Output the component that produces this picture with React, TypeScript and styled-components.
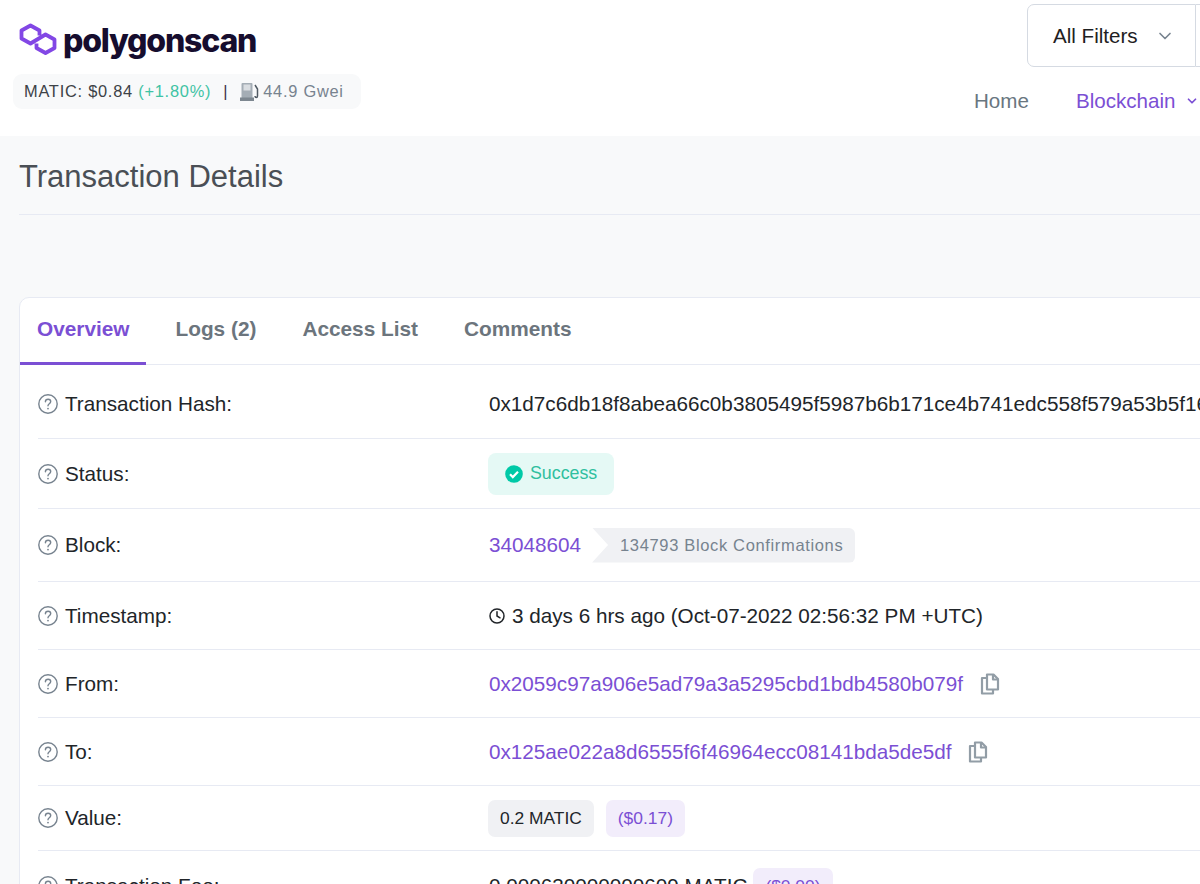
import styled, { createGlobalStyle } from "styled-components";
import { ChevronDown } from "lucide-react";

const GlobalStyle = createGlobalStyle`
  html, body {
    margin: 0;
    padding: 0;
    background: #f8f9fa;
    overflow: hidden;
  }
  body {
    font-family: "Liberation Sans", Arial, sans-serif;
    color: #212529;
  }
`;

const HelpIcon = () => (
  <svg width="20" height="20" viewBox="0 0 20 20" fill="none">
    <circle cx="10" cy="10" r="9.2" stroke="#77838f" strokeWidth="1.4" />
    <path
      d="M7.4 7.8c0-1.5 1.2-2.5 2.7-2.5s2.6.9 2.6 2.2c0 1.1-.6 1.6-1.4 2.2-.8.6-1.3 1-1.3 2"
      stroke="#77838f"
      strokeWidth="1.4"
      strokeLinecap="round"
    />
    <circle cx="10" cy="14.6" r="0.9" fill="#77838f" />
  </svg>
);

const CopyIcon = () => (
  <svg width="20" height="22" viewBox="0 0 20 22" fill="none" stroke="#929da6" strokeWidth="2.2">
    <path d="M7 1.5h6.5l4.5 4.5v10.5H7z" strokeLinejoin="round" />
    <path d="M13 1.5v5h5" strokeLinejoin="round" />
    <path d="M7 5H2v15.5h11v-4" strokeLinejoin="round" />
  </svg>
);

const LogoMark = () => (
  <svg width="38" height="34" viewBox="0 0 38 34" fill="none" stroke="#8247e5" strokeWidth="3.8" strokeLinejoin="round">
    <path d="M20.5 12.5V7.5l-9-5-9 5v8l9 5L26.5 11.5l9 5V25l-9 5-9-5v-4.5" />
  </svg>
);

const GasIcon = () => (
  <svg width="20" height="20" viewBox="0 0 20 20">
    <rect x="1.5" y="1" width="11" height="16" rx="1" fill="#a4adb5" />
    <rect x="3.5" y="2.5" width="7" height="6" fill="#d9dde1" />
    <rect x="0" y="15.5" width="14" height="3.5" fill="#7d8790" />
    <path d="M15 3l2.5 4v7c0 2-2.5 2-2.5 0" fill="none" stroke="#4f5962" strokeWidth="1.5" />
  </svg>
);

const ClockIcon = () => (
  <svg width="16" height="16" viewBox="0 0 16 16" fill="none" stroke="#212529" strokeWidth="1.5">
    <circle cx="8" cy="8" r="7" />
    <path d="M8 3.8V8l3 1.8" strokeLinecap="round" />
  </svg>
);

const CheckCircle = () => (
  <svg width="18" height="18" viewBox="0 0 18 18">
    <circle cx="9" cy="9" r="8.8" fill="#00c9a7" />
    <path d="M5 9.3l2.8 2.8L13 6.8" fill="none" stroke="#fff" strokeWidth="2.2" />
  </svg>
);

const tabs = ["Overview", "Logs (2)", "Access List", "Comments"];

const App = () => {
  return (
    <Page>
      <GlobalStyle />
      <Header>
        <Brand>
          <LogoRow>
            <LogoMark />
            <LogoText>polygonscan</LogoText>
          </LogoRow>
          <PriceBar>
            MATIC: $0.84 <Up>(+1.80%)</Up>
            <Pipe>|</Pipe>
            <GasIcon />
            <Gas>44.9 Gwei</Gas>
          </PriceBar>
        </Brand>
        <HeaderRight>
          <FilterGroup>
            <FilterBox>
              All Filters
              <ChevronDown size={20} color="#77838f" />
            </FilterBox>
            <SearchStub />
          </FilterGroup>
          <Nav>
            <NavItem>Home</NavItem>
            <NavItem $active>
              Blockchain
              <ChevronDown size={14} strokeWidth={3} />
            </NavItem>
          </Nav>
        </HeaderRight>
      </Header>

      <TitleBar>
        <Title>Transaction Details</Title>
      </TitleBar>

      <Card>
        <Tabs>
          {tabs.map((tab, index) => (
            <Tab key={tab} $active={index === 0}>
              {tab}
            </Tab>
          ))}
        </Tabs>
        <Rows>
          <Row $height={74} $shift={4}>
            <Label><HelpIcon />Transaction Hash:</Label>
            <Value>0x1d7c6db18f8abea66c0b3805495f5987b6b171ce4b741edc558f579a53b5f16c</Value>
          </Row>
          <Row $height={70}>
            <Label><HelpIcon />Status:</Label>
            <Value>
              <SuccessBadge><CheckCircle />Success</SuccessBadge>
            </Value>
          </Row>
          <Row $height={73}>
            <Label><HelpIcon />Block:</Label>
            <Value>
              <Link>34048604</Link>
              <Confirmations>134793 Block Confirmations</Confirmations>
            </Value>
          </Row>
          <Row $height={68}>
            <Label><HelpIcon />Timestamp:</Label>
            <Value>
              <ClockIcon />
              <TimeText>3 days 6 hrs ago (Oct-07-2022 02:56:32 PM +UTC)</TimeText>
            </Value>
          </Row>
          <Row $height={68}>
            <Label><HelpIcon />From:</Label>
            <Value>
              <Link>0x2059c97a906e5ad79a3a5295cbd1bdb4580b079f</Link>
              <CopyButton><CopyIcon /></CopyButton>
            </Value>
          </Row>
          <Row $height={68}>
            <Label><HelpIcon />To:</Label>
            <Value>
              <Link>0x125ae022a8d6555f6f46964ecc08141bda5de5df</Link>
              <CopyButton><CopyIcon /></CopyButton>
            </Value>
          </Row>
          <Row $height={65}>
            <Label><HelpIcon />Value:</Label>
            <Value>
              <GreyPill>0.2 MATIC</GreyPill>
              <PurplePill $gap={12}>($0.17)</PurplePill>
            </Value>
          </Row>
          <Row $height={68} $shift={2} $last>
            <Label><HelpIcon />Transaction Fee:</Label>
            <Value>
              0.000630000000609 MATIC
              <PurplePill $gap={6}>($0.00)</PurplePill>
            </Value>
          </Row>
        </Rows>
      </Card>
    </Page>
  );
};

export default App;

const Page = styled.div`
  width: 1200px;
  height: 884px;
  overflow: hidden;
`;

const Header = styled.header`
  display: flex;
  justify-content: space-between;
  height: 136px;
  background: #fff;
  padding-left: 13px;
  box-sizing: border-box;
`;

const Brand = styled.div`
  display: flex;
  flex-direction: column;
  padding-top: 22px;
`;

const LogoRow = styled.div`
  display: flex;
  align-items: center;
  gap: 6px;
  margin-left: 6px;
  height: 36px;
`;

const LogoText = styled.span`
  font-family: Inter, "Noto Sans", sans-serif;
  font-weight: 800;
  font-size: 32px;
  letter-spacing: -1.2px;
  color: #160d2e;
`;

const PriceBar = styled.div`
  display: flex;
  align-items: center;
  height: 35px;
  margin-top: 16px;
  padding: 0 17px 0 11px;
  background: #f8f9fa;
  border-radius: 9px;
  font-size: 16.4px;
  letter-spacing: 0.75px;
  white-space: pre;
  color: #3d4247;
`;

const Up = styled.span`
  color: #3fc3a4;
`;

const Pipe = styled.span`
  margin: 0 12px;
  color: #3d3348;
`;

const Gas = styled.span`
  margin-left: 3px;
  color: #77838f;
`;

const HeaderRight = styled.div`
  display: flex;
  flex-direction: column;
  align-items: flex-end;
  width: 226px;
  padding-top: 4px;
`;

const FilterGroup = styled.div`
  display: flex;
  width: 178px;
  height: 63px;
  margin-right: -5px;
`;

const FilterBox = styled.div`
  display: flex;
  align-items: center;
  justify-content: space-between;
  width: 169px;
  box-sizing: border-box;
  padding: 0 20px 0 25px;
  border: 1px solid #d5dae2;
  border-radius: 7px 0 0 7px;
  font-size: 20.6px;
  color: #1e2022;
  background: #fff;
`;

const SearchStub = styled.div`
  flex: 1;
  border: 1px solid #d5dae2;
  border-width: 1px 0;
`;

const Nav = styled.nav`
  display: flex;
  align-self: stretch;
  gap: 47px;
  margin-top: 22px;
`;

const NavItem = styled.span<{ $active?: boolean }>`
  display: flex;
  align-items: center;
  gap: 9px;
  font-size: 20.6px;
  white-space: nowrap;
  color: ${({ $active }) => ($active ? "#7b4fd4" : "#69767f")};
`;

const TitleBar = styled.div`
  margin: 0 0 0 19px;
  height: 79px;
  padding-top: 3px;
  display: flex;
  align-items: center;
  border-bottom: 1px solid #e7eaf3;
  box-sizing: border-box;
`;

const Title = styled.h1`
  margin: 0;
  font-size: 31px;
  font-weight: 400;
  color: #4a4f55;
`;

const Card = styled.section`
  margin: 82px 0 0 19px;
  width: 1240px;
  background: #fff;
  border: 1px solid #e7eaf3;
  border-radius: 10px 0 0 0;
  box-sizing: border-box;
`;

const Tabs = styled.div`
  display: flex;
  height: 67px;
  border-bottom: 1px solid #e7eaf3;
  box-sizing: border-box;
`;

const Tab = styled.div<{ $active?: boolean }>`
  display: flex;
  align-items: center;
  padding: 0 16px 3px ${({ $active }) => ($active ? "17px" : "30px")};
  font-size: 20.8px;
  font-weight: 700;
  color: ${({ $active }) => ($active ? "#7b4fd4" : "#6c757d")};
  border-bottom: 3px solid ${({ $active }) => ($active ? "#7b4fd4" : "transparent")};
  height: 67px;
  box-sizing: border-box;
`;

const Rows = styled.div`
  padding: 0 0 0 18px;
`;

const Row = styled.div<{ $height: number; $shift?: number; $last?: boolean }>`
  display: grid;
  grid-template-columns: 451px 1fr;
  align-items: center;
  height: ${({ $height }) => $height}px;
  padding-top: ${({ $shift }) => $shift ?? 0}px;
  box-sizing: border-box;
  border-bottom: ${({ $last }) => ($last ? "none" : "1px solid #e7eaf3")};
  font-size: 20.7px;
  color: #212529;
`;

const Label = styled.div`
  display: flex;
  align-items: center;
  gap: 7px;
`;

const Value = styled.div`
  display: flex;
  align-items: center;
  white-space: nowrap;
`;

const Link = styled.a`
  color: #7b4fd4;
`;

const SuccessBadge = styled.span`
  display: inline-flex;
  align-items: center;
  gap: 7px;
  height: 42px;
  padding: 0 17px;
  margin-left: -1px;
  border-radius: 8px;
  background: #e5f9f5;
  color: #2fbf9f;
  font-size: 17.8px;
`;

const Confirmations = styled.span`
  display: inline-flex;
  align-items: center;
  height: 35px;
  margin-left: 11px;
  padding: 0 12px 0 28px;
  background: #f0f1f4;
  border-radius: 0 6px 6px 0;
  clip-path: polygon(0 0, 100% 0, 100% 100%, 0 100%, 16px 50%);
  font-size: 16.5px;
  letter-spacing: 0.65px;
  color: #77838f;
`;

const TimeText = styled.span`
  margin-left: 7px;
`;

const CopyButton = styled.span`
  display: inline-flex;
  margin-left: 17px;
`;

const GreyPill = styled.span`
  display: inline-flex;
  align-items: center;
  height: 37px;
  padding: 0 12px;
  margin-left: -1px;
  border-radius: 7px;
  background: #f0f1f4;
  font-size: 17.4px;
`;

const PurplePill = styled.span<{ $gap: number }>`
  display: inline-flex;
  align-items: center;
  height: 37px;
  padding: 0 12px;
  margin-left: ${({ $gap }) => $gap}px;
  border-radius: 7px;
  background: #f2edfb;
  color: #7b4fd4;
  font-size: 17.4px;
`;
